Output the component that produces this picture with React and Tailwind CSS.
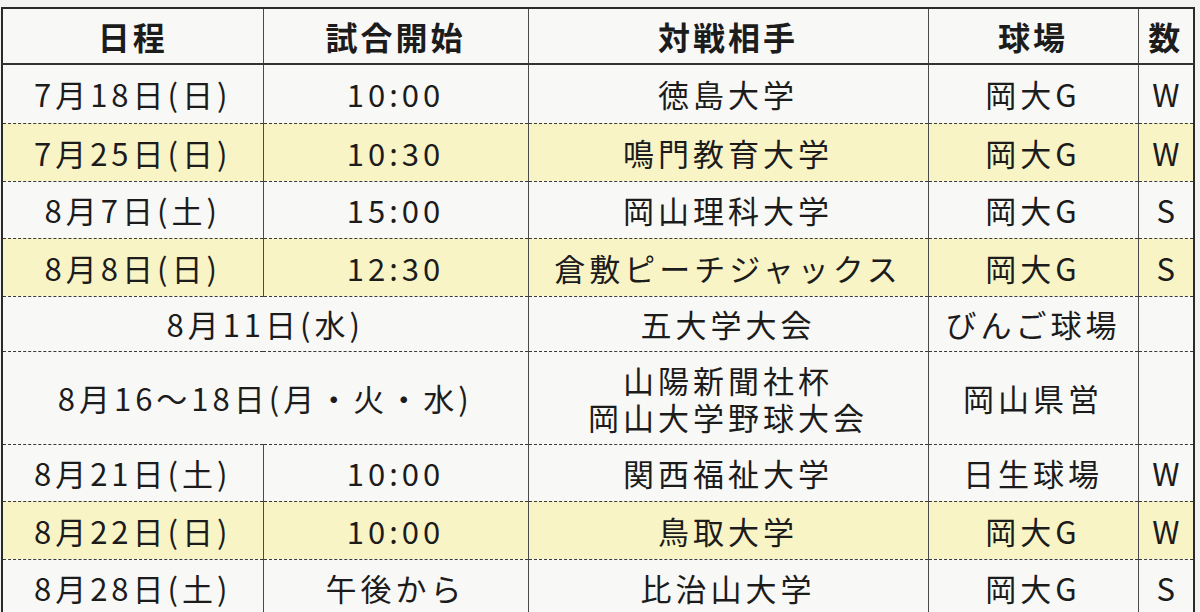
import React from "react";

const rows = [
  { date: "7月18日(日)", time: "10:00", opp: ["徳島大学"], place: "岡大G", n: "W", h: "h-[59px]" },
  { date: "7月25日(日)", time: "10:30", opp: ["鳴門教育大学"], place: "岡大G", n: "W", hl: true, h: "h-[58px]" },
  { date: "8月7日(土)", time: "15:00", opp: ["岡山理科大学"], place: "岡大G", n: "S", h: "h-[57px]" },
  { date: "8月8日(日)", time: "12:30", opp: ["倉敷ピーチジャックス"], place: "岡大G", n: "S", hl: true, h: "h-[58px]" },
  { date: "8月11日(水)", opp: ["五大学大会"], place: "びんご球場", n: "", h: "h-[55px]" },
  { date: "8月16〜18日(月・火・水)", opp: ["山陽新聞社杯", "岡山大学野球大会"], place: "岡山県営", n: "", h: "h-[93px]" },
  { date: "8月21日(土)", time: "10:00", opp: ["関西福祉大学"], place: "日生球場", n: "W", h: "h-[57px]" },
  { date: "8月22日(日)", time: "10:00", opp: ["鳥取大学"], place: "岡大G", n: "W", hl: true, h: "h-[58px]" },
  { date: "8月28日(土)", time: "午後から", opp: ["比治山大学"], place: "岡大G", n: "S", h: "h-[58px]" },
];

// solid verticals, dashed horizontals
const td =
  "border border-dashed border-y-[#3a3a3a] border-x-[#4a4a4a] [border-left-style:solid] [border-right-style:solid] p-0 text-center align-middle";

export default function App() {
  return (
    <div
      className="w-[1200px] h-[612px] overflow-hidden bg-[#f3f3f1] pt-[7px] pl-[1px] text-[#1c1c1c]"
      style={{ fontFamily: '"Noto Sans CJK JP", "Noto Sans", sans-serif' }}
    >
      <table className="w-[1192px] table-fixed border-collapse border-2 border-[#2a2a2a] bg-[#f8f8f6]">
        <colgroup>
          <col className="w-[261px]" />
          <col className="w-[265px]" />
          <col className="w-[400px]" />
          <col className="w-[210px]" />
          <col className="w-[56px]" />
        </colgroup>
        <thead>
          <tr className="h-[56px]">
            {["日程", "試合開始", "対戦相手", "球場", "数"].map((h) => (
              <th
                key={h}
                className="border-x border-x-[#4a4a4a] border-b-2 border-b-[#333] p-0 text-center text-[32px] font-bold tracking-[3px] leading-none"
              >
                {h}
              </th>
            ))}
          </tr>
        </thead>
        <tbody className="text-[31px] tracking-[4px] leading-[37px]">
          {rows.map((r, i) => (
            <tr key={i} className={`${r.h} ${r.hl ? "bg-[#f9f4c6]" : ""}`}>
              {r.time ? (
                <>
                  <td className={td}>{r.date}</td>
                  <td className={td}>{r.time}</td>
                </>
              ) : (
                <td colSpan={2} className={td}>
                  {r.date}
                </td>
              )}
              <td className={td}>
                {r.opp.map((o) => (
                  <div key={o}>{o}</div>
                ))}
              </td>
              <td className={td}>{r.place}</td>
              <td className={`${td} tracking-normal`}>{r.n}</td>
            </tr>
          ))}
        </tbody>
      </table>
    </div>
  );
}
